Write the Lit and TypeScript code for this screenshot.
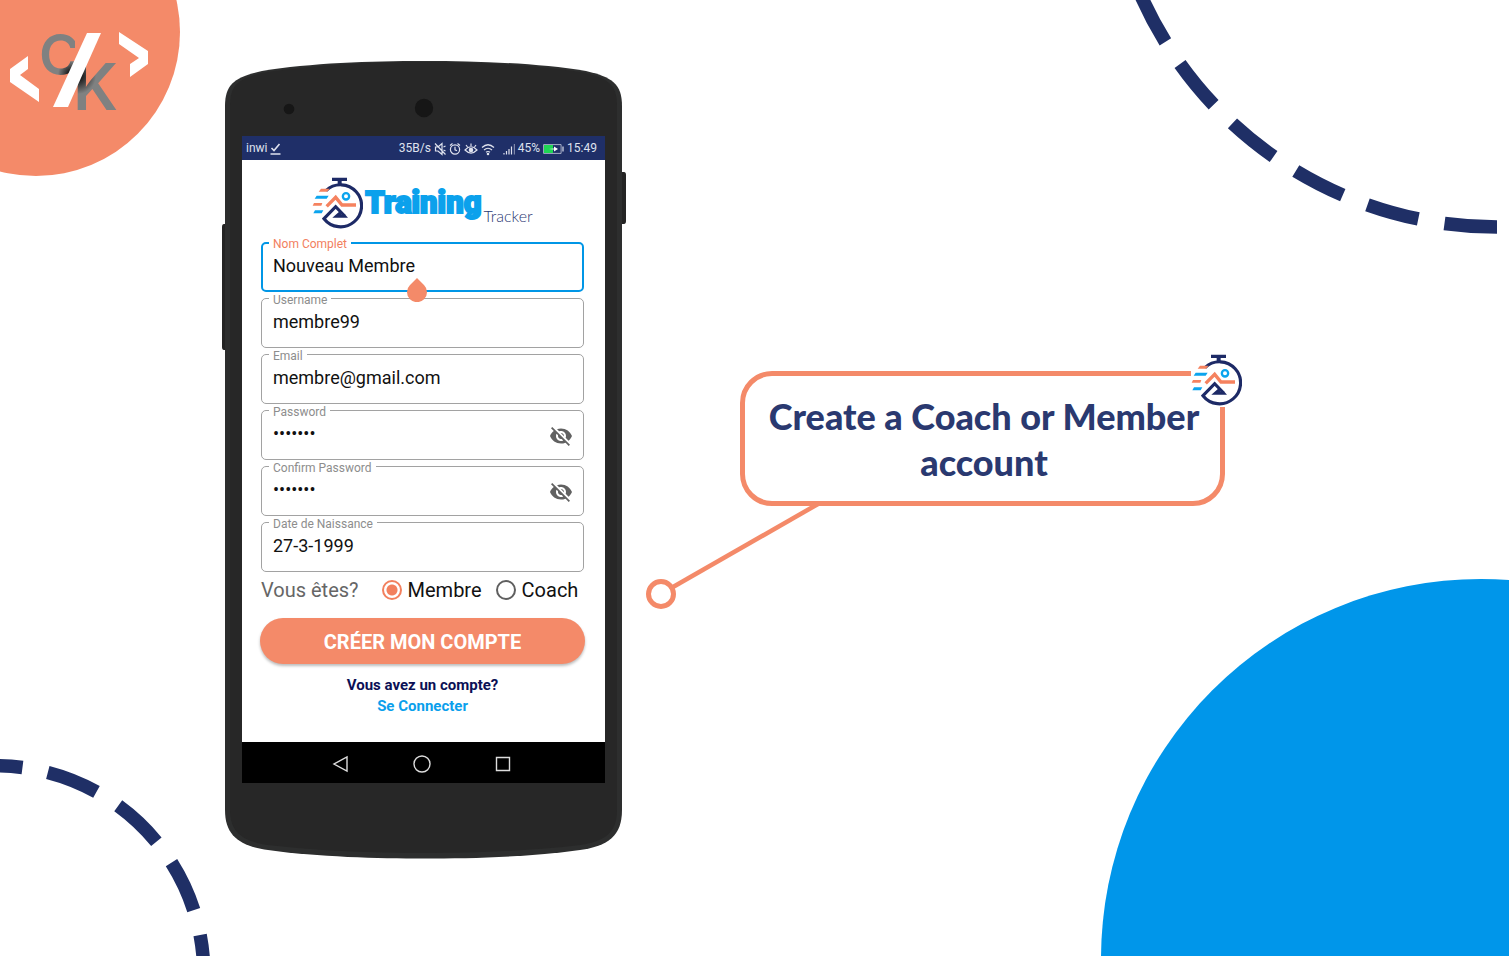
import { LitElement, html, css, svg, nothing } from "lit";
import { customElement, property } from "lit/decorators.js";

/** Stopwatch with a runner, the mark of Training Tracker. */
@customElement("tracker-mark")
class TrackerMark extends LitElement {
  static styles = css`
    :host { display: block; flex: none; width: 51px; height: 53px; background: #fff; }
    svg { display: block; width: 100%; height: 100%; }
  `;
  render() {
    return html`<svg viewBox="213 140 153 159" fill="none" aria-hidden="true">
      <path d="M273 142h45v10h-16v9h-12v-9h-17z" fill="#1d2a66" />
      <path d="M255 181 A63 63 0 1 1 249 265 L284 229 L311 257" stroke="#1d2a66" stroke-width="9.500" />
      <path d="M274 262 L297 242 L301 253 H313 L321 262z" fill="#1d2a66" />
      <path d="M257 228 L284 201 L303 224 H345" stroke="#f5825f" stroke-width="10" />
      <circle cx="315" cy="198" r="9.500" stroke="#0ba4ee" stroke-width="7" />
      <path d="M240 175h26l-8 9h-25zM219 218h25l-3 8h-26z" fill="#f5825f" />
      <path d="M227 196h36l-6 9h-36zM222 240h25l-5 9h-25z" fill="#0ba4ee" />
    </svg>`;
  }
}

/** Outlined text box with its label on the border. */
@customElement("outlined-field")
class OutlinedField extends LitElement {
  @property() label = "";
  @property() value = "";
  @property() type = "text";
  @property({ type: Boolean, reflect: true }) active = false;
  static styles = css`
    :host { display: block; }
    .box {
      position: relative; display: flex; align-items: center; box-sizing: border-box;
      height: 50px; padding: 0 10px; border: 1px solid #a2a2a2; border-radius: 5px;
    }
    label {
      position: absolute; left: 7px; top: -5px; padding: 0 4px; background: #fff;
      font-size: 12px; line-height: 12px; color: #8d8d8d;
    }
    input {
      flex: 1; min-width: 0; padding: 0 1px 2px; border: 0; outline: 0; background: none;
      font: 18px/24px Roboto, sans-serif; color: #111;
    }
    .eye { display: flex; padding: 2px 0 0; border: 0; background: none; color: #616161; }
    .eye svg { width: 24px; height: 24px; fill: currentColor; }
    .handle { position: absolute; left: 143px; top: 34px; width: 22px; height: 24px; }
    :host([active]) { position: relative; z-index: 1; }
    :host([active]) .box { border: 2px solid #0096e6; padding: 0 9px; }
    :host([active]) label { left: 6px; top: -6px; color: #f2805e; }
  `;
  render() {
    return html`<div class="box">
      <label for="in">${this.label}</label>
      <input id="in" type=${this.type} .value=${this.value} />
      ${this.type === "password"
        ? html`<button class="eye" type="button" aria-label="Afficher">
            <svg viewBox="0 0 24 24"><path d="M12 7c2.76 0 5 2.24 5 5 0 .65-.13 1.26-.36 1.83l2.92 2.92c1.51-1.26 2.7-2.89 3.43-4.75-1.73-4.39-6-7.5-11-7.5-1.4 0-2.74.25-3.98.7l2.16 2.16C10.74 7.13 11.35 7 12 7zM2 4.27l2.28 2.28.46.46C3.08 8.3 1.78 10.02 1 12c1.73 4.39 6 7.5 11 7.5 1.55 0 3.03-.3 4.38-.84l.42.42L19.73 22 21 20.73 3.27 3 2 4.27zM7.53 9.8l1.55 1.55c-.05.21-.08.43-.08.65 0 1.66 1.34 3 3 3 .22 0 .44-.03.65-.08l1.55 1.55c-.67.33-1.41.53-2.2.53-2.76 0-5-2.24-5-5 0-.79.2-1.53.53-2.2zm4.31-.78l3.15 3.15.02-.16c0-1.66-1.34-3-3-3l-.17.01z"/></svg>
          </button>`
        : nothing}
      ${this.active
        ? html`<svg class="handle" viewBox="0 0 22 24"><path d="M11 0 L18 7 A10 10 0 1 1 4 7 Z" fill="#f48a69" /></svg>`
        : nothing}
    </div>`;
  }
}

const FIELDS = [
  { label: "Nom Complet", value: "Nouveau Membre", active: true },
  { label: "Username", value: "membre99" },
  { label: "Email", value: "membre@gmail.com" },
  { label: "Password", value: "membre9", type: "password" },
  { label: "Confirm Password", value: "membre9", type: "password" },
  { label: "Date de Naissance", value: "27-3-1999" },
];

const icon = (w: number, body: unknown) =>
  html`<svg width=${w} height="14" viewBox="0 0 ${w} 14" fill="none" stroke="#dfe2ee" stroke-width="1.2" aria-hidden="true">${body}</svg>`;

@customElement("phone-screen")
class PhoneScreen extends LitElement {
  static styles = css`
    :host { display: flex; flex-direction: column; background: #fff; font-family: Roboto, sans-serif; }
    .status {
      display: flex; align-items: center; gap: 3px; box-sizing: border-box; height: 24px; padding: 1px 8px 0 4px;
      background: #1f2f68; color: #dfe2ee; font-size: 12px; line-height: 23px;
    }
    .status svg { flex: none; }
    .push { margin-left: auto; }
    .gap { margin-left: 2px; }
    .brand { display: flex; justify-content: center; padding: 17px 2px 0 0; height: 53px; }
    .name {
      margin: 0 0 0 2px; display: flex; gap: 2px; white-space: nowrap;
      font: 900 31px/52px Roboto, sans-serif; color: #0ba1ec;
      -webkit-text-stroke: 2px #0ba1ec;
    }
    .sub { font: 300 16px/78px Lato, sans-serif; color: #2a3872; -webkit-text-stroke: 0; }
    form { display: flex; flex-direction: column; padding: 12px 21px 0 19px; }
    .fields { display: grid; gap: 6px; }
    .role {
      display: flex; align-items: center; margin-top: 6px; height: 24px; color: #666;
      font-size: 20px; line-height: 24px;
    }
    .role label { display: flex; align-items: center; gap: 6px; color: #111; margin-left: 14px; }
    .role .first { margin-left: 23px; }
    .role input {
      appearance: none; box-sizing: border-box; width: 20px; height: 20px; margin: 0;
      border: 2px solid #5f5f5f; border-radius: 50%; background: #fff;
    }
    .role input:checked { border-color: #f2805e; background: radial-gradient(circle, #f2805e 5px, #fff 6px); }
    .submit {
      height: 46px; margin: 16px -1px 0; border: 0; border-radius: 23px; background: #f48a69; color: #fff;
      font: 700 20px/46px Roboto, sans-serif; box-shadow: 0 2px 3px #0004;
    }
    .login { margin: 11px 0 0; text-align: center; font-weight: 700; font-size: 15px; line-height: 21px; color: #0b1055; }
    .login a { display: block; color: #0a9fec; text-decoration: none; }
    nav {
      display: flex; justify-content: center; align-items: center; gap: 61px; box-sizing: border-box;
      margin-top: auto; padding: 2px 3px 0 0; height: 41px; background: #000;
    }
    nav button { display: flex; padding: 0; border: 0; background: none; }
  `;
  render() {
    return html`
      <div class="status">
        <span>inwi</span>
        ${icon(11, svg`<path d="M1.5 6 L4 8.5 L9.5 2 M0.5 12 H10.5" stroke-width="1.6"/>`)}
        <span class="push">35B/s</span>
        ${icon(12, svg`<path d="M1.5 5h2.5l4-3.5v11L4 9H1.500zM1 1.500l10.500 11M9.500 5l2-1M9.500 8l2 1"/>`)}
        ${icon(12, svg`<circle cx="6" cy="7.500" r="4.600"/><path d="M6 4.800v3l2 1M1 3.500l2.500-2M11 3.500l-2.500-2"/>`)}
        ${icon(14, svg`<path d="M1 8q6-6.500 12 0q-6 6-12 0zM7 4V1.500M3.500 5L2 3M10.500 5L12 3"/><circle cx="7" cy="8" r="1.700" fill="#dfe2ee"/>`)}
        ${icon(14, svg`<path d="M1 5.500q6-5.500 12 0M3 8q4-3.500 8 0M5 10.300q2-1.600 4 0"/><circle cx="7" cy="12" r=".7"/>`)}
        <span class="gap"></span>
        ${icon(12, svg`<path d="M1 11v1.500M3.500 9v3.500M6 7v5.500M8.500 4.500v8"/><path d="M11.400 2v10.500" opacity=".5"/>`)}
        <span>45%</span>
        ${icon(21, svg`<path d="M.6 2.600h17.500v8.800H.6z" stroke-width="1" opacity=".7"/><path d="M1 3h9v8H1z" fill="#1fd655" stroke="none"/><path d="M6 7l5-.6V4.500L15 7l-4 2.500V7.600z" fill="#fff" stroke="none"/><path d="M20 4.500v5"/>`)}
        <span>15:49</span>
      </div>
      <header class="brand">
        <tracker-mark></tracker-mark>
        <h1 class="name">Training<span class="sub">Tracker</span></h1>
      </header>
      <form>
        <div class="fields">
          ${FIELDS.map(
            (f) => html`<outlined-field .label=${f.label} .value=${f.value} .type=${f.type ?? "text"} ?active=${!!f.active}></outlined-field>`
          )}
        </div>
        <div class="role" role="radiogroup" aria-labelledby="q">
          <span id="q">Vous êtes?</span>
          <label class="first"><input type="radio" name="role" checked />Membre</label>
          <label><input type="radio" name="role" />Coach</label>
        </div>
        <button class="submit" type="button">CRÉER MON COMPTE</button>
        <p class="login">Vous avez un compte?<a href="#login">Se Connecter</a></p>
      </form>
      <nav>
        <button type="button" aria-label="Retour"><svg width="20" height="20" fill="none" stroke="#ddd" stroke-width="1.400"><path d="M16 3v14L3 10z" /></svg></button>
        <button type="button" aria-label="Accueil"><svg width="20" height="20" fill="none" stroke="#ddd" stroke-width="1.400"><circle cx="10" cy="10" r="8" /></svg></button>
        <button type="button" aria-label="Récents"><svg width="20" height="20" fill="none" stroke="#ddd" stroke-width="1.400"><path d="M3.500 3.500h13v13h-13z" /></svg></button>
      </nav>
    `;
  }
}

@customElement("app-root")
class AppRoot extends LitElement {
  static styles = css`
    :host { display: block; position: relative; min-height: 100vh; overflow: hidden; background: #fff; }
    .deco { position: absolute; display: block; }
    .top-left { left: 0; top: 0; }
    .top-right { right: 0; top: 0; }
    .bottom-left { left: 0; bottom: 0; }
    .bottom-right { right: 0; bottom: 0; }
    .stage { position: relative; display: flex; align-items: flex-start; gap: 20px; padding: 61px 24px 0 222px; }
    .phone { position: relative; flex: none; width: 404px; box-sizing: border-box; padding: 75px 21px 76px 20px; }
    .case { position: absolute; left: 0; top: 0; }
    phone-screen { position: relative; height: 647px; }
    .callout { flex: 0 1 579px; margin-top: 310px; }
    .bubble {
      position: relative; margin-left: 94px; padding: 17px 16px 16px 19px;
      border: 5px solid #f48a69; border-radius: 32px; background: #fff;
    }
    .bubble h2 {
      margin: 0; text-align: center; color: #2a3970;
      font: 900 36px/46px Lato, sans-serif;
    }
    .badge { position: absolute; right: -22px; top: -22px; }
    .pointer { display: block; margin-top: -2px; }
  `;
  render() {
    return html`
      <svg class="deco top-left" width="181" height="177" aria-hidden="true">
        <defs>
          <radialGradient id="kg" gradientUnits="userSpaceOnUse" cx="78" cy="76" r="18">
            <stop offset="0.2" stop-color="#1a1a1a" /><stop offset="1" stop-color="#7f8181" />
          </radialGradient>
          <radialGradient id="cg" gradientUnits="userSpaceOnUse" cx="71" cy="74" r="13">
            <stop offset="0.2" stop-color="#1a1a1a" /><stop offset="1" stop-color="#7f8181" />
          </radialGradient>
        </defs>
        <circle cx="36" cy="32" r="144" fill="#f48a69" />
        <text x="39" y="75" font-family="Inter" font-weight="600" font-size="56" fill="url(#cg)">C</text>
        <path d="M75 30H117V111H53L75 62z" fill="#f48a69" />
        <text x="73" y="110" font-family="Inter" font-weight="600" font-size="64" fill="url(#kg)">K</text>
        <path d="M87 33h14l-33 74H53z" fill="#fff" />
        <path d="M28 56v13l-8 6 19 14v13L10 82V69zM119 32l29 19v13l-18 13V64l9-6-20-14z" fill="#fff" />
      </svg>
      <svg class="deco top-right" width="409" height="240" viewBox="1100 0 409 240" aria-hidden="true">
        <path d="M1497 227 A389.600 389.600 0 0 1 1107.400 -162.600" fill="none" stroke="#1f2f66" stroke-width="13.500" stroke-dasharray="52.800 26.500" />
      </svg>
      <svg class="deco bottom-left" width="215" height="201" viewBox="0 755 215 201" aria-hidden="true">
        <path d="M-4.400 765.800 A208.200 208.200 0 0 1 203.800 974" fill="none" stroke="#1f2f66" stroke-width="13.500" stroke-dasharray="52.500 25.800" stroke-dashoffset="25.500" />
      </svg>
      <svg class="deco bottom-right" width="409" height="378" viewBox="1100 578 409 378" aria-hidden="true">
        <circle cx="1481" cy="959" r="380" fill="#0096ea" />
      </svg>

      <main class="stage">
        <div class="phone">
          <svg class="case" width="404" height="798" viewBox="222 61 404 798" aria-hidden="true">
            <path d="M226 224h-2q-2 0-2 3v120q0 3 2 3h2zM621 172h3q2 0 2 3v46q0 3-2 3h-3z" fill="#242424" />
            <path d="M225 106 C225 84 235 77 262 71 C310 63 370 61 424 61 C478 61 538 63 586 71 C612 77 622 84 622 106 V810 C622 836 608 846 580 850 C530 857 470 858.500 424 858.500 C378 858.500 318 857 268 850 C240 846 225 836 225 810 Z" fill="#2d2e2e" />
            <path d="M230 106 C230 85 238 79 262 73 C310 65 370 62 424 62 C478 62 538 65 586 73 C609 79 617 85 617 106 V810 C617 832 606 841 580 845 C530 851 470 853 424 853 C378 853 318 851 268 845 C242 841 230 832 230 810 Z" fill="#272727" />
            <circle cx="289" cy="109" r="5.300" fill="#161616" />
            <circle cx="424" cy="108" r="9.200" fill="#161616" />
          </svg>
          <phone-screen></phone-screen>
        </div>
        <section class="callout">
          <div class="bubble">
            <h2>Create a Coach or Member account</h2>
            <tracker-mark class="badge"></tracker-mark>
          </div>
          <svg class="pointer" width="180" height="106" viewBox="646 504 180 106" fill="none" stroke="#f48a69" aria-hidden="true">
            <path d="M673 587 L818 504" stroke-width="4.500" />
            <circle cx="661" cy="594" r="12.500" stroke-width="5" />
          </svg>
        </section>
      </main>
    `;
  }
}
